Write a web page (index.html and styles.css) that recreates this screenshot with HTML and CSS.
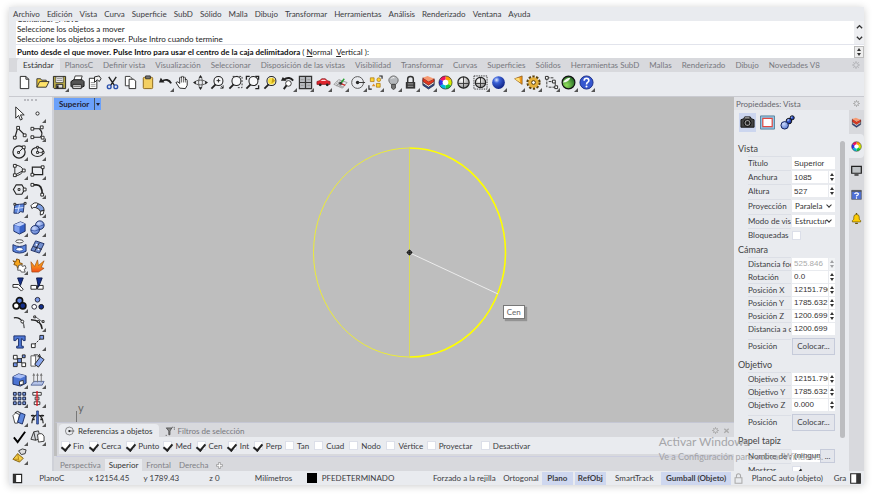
FILE: index.html
```html
<!DOCTYPE html>
<html lang="es">
<head>
<meta charset="utf-8">
<title>Superior</title>
<link rel="stylesheet" href="styles.css">
</head>
<body>
<svg class="defs" aria-hidden="true">
  <defs>
    <radialGradient id="blueball" cx=".35" cy=".3" r=".8"><stop offset="0" stop-color="#dfe9ff"/><stop offset=".3" stop-color="#3b62d8"/><stop offset="1" stop-color="#0a1a78"/></radialGradient>
    <radialGradient id="softball" cx=".35" cy=".3" r=".8"><stop offset="0" stop-color="#cfdcff"/><stop offset="1" stop-color="#4f74cc"/></radialGradient>
    <radialGradient id="greyball" cx=".35" cy=".3" r=".8"><stop offset="0" stop-color="#fff"/><stop offset="1" stop-color="#888"/></radialGradient>
    <radialGradient id="greenball" cx=".35" cy=".7" r=".8"><stop offset="0" stop-color="#8fe05a"/><stop offset="1" stop-color="#175a20"/></radialGradient>
    <linearGradient id="fire" x2="0" y2="1"><stop offset="0" stop-color="#ffc21a"/><stop offset="1" stop-color="#f0501a"/></linearGradient>
    <symbol id="gear" viewBox="0 0 16 16"><circle cx="8" cy="8" r="4.5" fill="none" stroke="currentColor" stroke-width="2"/><path d="M8 0v4M8 12v4M0 8h4M12 8h4M2.5 2.5l2.6 2.6M10.9 10.9l2.6 2.6M13.5 2.5l-2.6 2.6M5.1 10.9l-2.6 2.6" stroke="currentColor" stroke-width="2"/></symbol>
    <symbol id="wheel" viewBox="0 0 16 16"><g fill="none" stroke-width="4"><path d="M8 3a5 5 0 0 1 4.3 2.5" stroke="#ff9d00"/><path d="M12.3 5.5a5 5 0 0 1 0 5" stroke="#d6e800"/><path d="M12.3 10.5A5 5 0 0 1 8 13" stroke="#18c840"/><path d="M8 13a5 5 0 0 1-4.3-2.5" stroke="#00b8e0"/><path d="M3.7 10.5a5 5 0 0 1 0-5" stroke="#3430e8"/><path d="M3.7 5.5A5 5 0 0 1 8 3" stroke="#f01060"/></g><circle cx="8" cy="8" r="2.900" fill="#fff"/><circle cx="8" cy="8" r="7" fill="none" stroke="#222" stroke-width=".7"/></symbol>
    <symbol id="layers" viewBox="0 0 16 16"><path d="M2 8l6 4 6-4v3l-6 4-6-4z" fill="#24429c" stroke="#222" stroke-width=".7"/><path d="M2 5l6 4 6-4v4l-6 4-6-4z" fill="#f4f4f4" stroke="#222" stroke-width=".7"/><path d="M2 3l6 4 6-3v3l-6 4-6-4z" fill="#e2391f" stroke="#511" stroke-width=".7"/><path d="M2 3l5-2 7 3-6 3z" fill="#f79a72"/></symbol>
    <symbol id="lens" viewBox="0 0 16 16"><circle cx="9" cy="6.500" r="4.800" fill="#f7f8fa" stroke="#222" stroke-width="1.100"/><path d="M6 10L1.500 14.500" stroke="#222" stroke-width="2"/></symbol>
    <symbol id="target" viewBox="0 0 16 16"><circle cx="7" cy="8" r="6.300" fill="none" stroke="#555"/><circle cx="7" cy="8" r="1.800" fill="#222"/><path d="M7 8h8" stroke="#333"/></symbol>
  </defs>
</svg>
<div class="window">
  <nav class="menu">
    <a href="#">Archivo</a><a href="#">Edición</a><a href="#">Vista</a><a href="#">Curva</a><a href="#">Superficie</a><a href="#">SubD</a><a href="#">Sólido</a><a href="#">Malla</a><a href="#">Dibujo</a><a href="#">Transformar</a><a href="#">Herramientas</a><a href="#">Análisis</a><a href="#">Renderizado</a><a href="#">Ventana</a><a href="#">Ayuda</a>
  </nav>
  <section class="command">
    <div class="history">
      <p>Comando: _Move</p>
      <p>Seleccione los objetos a mover</p>
      <p>Seleccione los objetos a mover. Pulse Intro cuando termine</p>
      <div class="scroll"><svg viewBox="0 0 8 8"><path d="M1 6l3-3 3 3" fill="none" stroke="#333" stroke-width="1.600"/></svg><svg viewBox="0 0 8 8"><path d="M1 2l3 3 3-3" fill="none" stroke="#333" stroke-width="1.600"/></svg></div>
    </div>
    <div class="prompt"><p><b>Punto desde el que mover. Pulse Intro para usar el centro de la caja delimitadora</b> ( <u>N</u>ormal&nbsp; <u>V</u>ertical ):</p><span class="spin boxed"></span></div>
  </section>
  <nav class="tabs">
    <button class="on">Estándar</button><button>PlanosC</button><button>Definir vista</button><button>Visualización</button><button>Seleccionar</button><button>Disposición de las vistas</button><button>Visibilidad</button><button>Transformar</button><button>Curvas</button><button>Superficies</button><button>Sólidos</button><button>Herramientas SubD</button><button>Mallas</button><button>Renderizado</button><button>Dibujo</button><button>Novedades V8</button>
    <svg class="cog"><use href="#gear"/></svg>
  </nav>
  <div class="toolbar">
    <div class="tools">
      <button aria-label="Nuevo"><svg viewBox="0 0 16 16"><path d="M3.500 1.500h6l3 3v10h-9z" fill="#fff" stroke="#222"/><path d="M9.500 1.500v3h3" fill="none" stroke="#222"/></svg></button>
      <button aria-label="Abrir"><svg viewBox="0 0 16 16"><path d="M2 13V4h4l1 1.500h5V8" fill="#f4cf3a" stroke="#333"/><path d="M2 13l3-6h10l-3 6z" fill="#ffe36a" stroke="#333"/></svg></button>
      <button class="more" aria-label="Guardar"><svg viewBox="0 0 16 16"><path d="M1.500 1.500h13v13h-12l-1-1z" fill="#b5a646" stroke="#222"/><path d="M4 2h8v6H4z" fill="#fff" stroke="#333" stroke-width=".7"/><path d="M5 4h6M5 6h6" stroke="#777"/><path d="M4.500 10h7v4h-7z" fill="#ddd" stroke="#222"/><path d="M6 11v3" stroke="#222" stroke-width="2"/></svg></button>
      <button aria-label="Imprimir"><svg viewBox="0 0 16 16"><path d="M4 6l1.500-5H13l-1.500 5" fill="#fff" stroke="#333"/><path d="M1 7l3-2h9l2 2v5l-2 1H2l-1-1z" fill="#555" stroke="#111"/><path d="M3 10h9v4.500H3z" fill="#ddd" stroke="#222"/><path d="M4 12h7" stroke="#555"/></svg></button>
      <button aria-label="Propiedades del documento"><svg viewBox="0 0 16 16"><path d="M2.500 3.500h8v11h-8z" fill="#fff" stroke="#222"/><path d="M8 2l5-1 2 3-2 3-2-2-3 3z" fill="#eee" stroke="#222"/><path d="M4 8h4M4 10h5M4 12h5" stroke="#999"/></svg></button>
      <button aria-label="Cortar"><svg viewBox="0 0 16 16"><path d="M4 2l6 9M12 2l-6 9" stroke="#222" stroke-width="1.500"/><circle cx="4.500" cy="12.500" r="2" fill="none" stroke="#2b51ae" stroke-width="1.500"/><circle cx="11.500" cy="12.500" r="2" fill="none" stroke="#2b51ae" stroke-width="1.500"/></svg></button>
      <button aria-label="Copiar"><svg viewBox="0 0 16 16"><path d="M2.500 1.500h5l2 2v8h-7z" fill="#fff" stroke="#333"/><path d="M6.500 4.500h5l2 2v8h-7z" fill="#fff" stroke="#222"/></svg></button>
      <button aria-label="Pegar"><svg viewBox="0 0 16 16"><rect x="3.500" y="2.500" width="10" height="12" rx="1" fill="#f3cf62" stroke="#8a6416"/><path d="M6 1h5v3H6z" fill="#777" stroke="#333"/></svg></button>
      <button class="more" aria-label="Deshacer"><svg viewBox="0 0 16 16"><path d="M4 7c4-3 8-2 10 2" fill="none" stroke="#222" stroke-width="2"/><path d="M1 8l2-5 4 5z" fill="#222"/></svg></button>
      <button aria-label="Desplazar"><svg viewBox="0 0 16 16"><path d="M5 14l-4-6q2-2 4 1V3q1-2 2 0V2q1-2 2 0v1q1-2 2 0v2q2-1 2 1v5l-2 3.500z" fill="#fff" stroke="#222"/><path d="M7 3v5M9 3v5M11 4v4" stroke="#222" stroke-width=".7"/></svg></button>
      <button aria-label="Rotar vista"><svg viewBox="0 0 16 16"><ellipse cx="8" cy="8" rx="6" ry="2.500" fill="none" stroke="#555"/><ellipse cx="8" cy="8" rx="2" ry="6" fill="none" stroke="#555"/><path d="M8 0l2 3H6zM8 16l-2-3h4zM0 8l3-2v4zM16 8l-3-2v4z" fill="#222"/></svg></button>
      <button aria-label="Zoom dinámico"><svg viewBox="0 0 16 16"><use href="#lens"/><path d="M7 6h4M9 4v4M12 12l2 2M14 11v3h-3" stroke="#222" fill="none"/></svg></button>
      <button aria-label="Zoom ventana"><svg viewBox="0 0 16 16"><path d="M5 1.500h10v12h-6" fill="none" stroke="#333" stroke-dasharray="2 1.500"/><use href="#lens"/></svg></button>
      <button aria-label="Zoom extensión"><svg viewBox="0 0 16 16"><path d="M1.500 5V1.500H5M11 1.500h3.500V5M14.500 11v3.500H11" fill="none" stroke="#222" stroke-width="1.400"/><use href="#lens"/></svg></button>
      <button aria-label="Zoom seleccionado"><svg viewBox="0 0 16 16"><use href="#lens"/><circle cx="9" cy="6.500" r="3.700" fill="#f7df45"/><path d="M10 3l3 3-4 3" fill="#c9a114"/></svg></button>
      <button class="more" aria-label="Deshacer vista"><svg viewBox="0 0 16 16"><path d="M4 5c4-3 8-2 10 1" fill="none" stroke="#222" stroke-width="2"/><path d="M1 6l2-4 4 4z" fill="#222"/><circle cx="9" cy="9" r="3" fill="#fff" stroke="#333"/><path d="M7 11l-3 4" stroke="#222" stroke-width="2"/></svg></button>
      <button class="more" aria-label="Cuatro vistas"><svg viewBox="0 0 16 16"><path d="M1.500 1.500h13v13h-13z" fill="#b9bcc1" stroke="#333" stroke-width="1.300"/><path d="M8 2v12M2 8h12" stroke="#333" stroke-width="1.300"/><path d="M3 5h3M10 5h3M3 11h3M10 11h3" stroke="#999"/></svg></button>
      <button class="more" aria-label="Vista nombrada"><svg viewBox="0 0 16 16"><path d="M1 7l3-1 2-2h4l2 2 3 1v3H1z" fill="#e0252d" stroke="#7a1015" stroke-width=".7"/><path d="M6.500 5h3l1.500 1.500H5z" fill="#fdd"/><circle cx="4.500" cy="10.500" r="1.500" fill="#222"/><circle cx="12" cy="10.500" r="1.500" fill="#222"/></svg></button>
      <button class="more" aria-label="Plano de construcción"><svg viewBox="0 0 16 16"><path d="M1 10l5-5 9 3-5 6zM4 7l9 4M3 9l8 4M8 6l-4 6M11 7l-4 6" fill="none" stroke="#999"/><path d="M8 9l4-5" stroke="#25a030" stroke-width="1.500"/><path d="M8 9l5 2" stroke="#d03030" stroke-width="1.500"/><circle cx="8" cy="9" r="1.500" fill="#333"/></svg></button>
      <button class="more" aria-label="Referencias"><svg viewBox="0 0 16 16"><use href="#target"/></svg></button>
      <button class="more" aria-label="Seleccionar"><svg viewBox="0 0 16 16"><path d="M1 11v4h3M12 1h3v3" fill="none" stroke="#222" stroke-width="1.200"/><path d="M2.500 3h4v4h-4zM9 9h4v4H9z" fill="#fcd22e" stroke="#a06a08" stroke-width=".7"/><circle cx="11.500" cy="5" r="2" fill="#fcd22e" stroke="#a06a08" stroke-width=".7"/><path d="M4 12l2-3 2 3z" fill="#e0902a"/></svg></button>
      <button class="more" aria-label="Ocultar"><svg viewBox="0 0 16 16"><path d="M5.500 10C0 5 5 1 8 1s8 4 2.500 9z" fill="#b5b8bc" stroke="#666"/><path d="M6 10h4v4l-2 1.500L6 14z" fill="#777" stroke="#444"/><path d="M6 4q1-2 3-1" stroke="#fff" fill="none"/></svg></button>
      <button class="more" aria-label="Bloquear"><svg viewBox="0 0 16 16"><path d="M5 8V4q0-2.500 3-2.500T11 4v4" fill="none" stroke="#333" stroke-width="1.600"/><path d="M3 7.500h10v7H3z" fill="#333"/><path d="M5 9.500h6M5 12h6" stroke="#aaa"/></svg></button>
      <button class="more" aria-label="Capas"><svg><use href="#layers"/></svg></button>
      <button class="more" aria-label="Color"><svg><use href="#wheel"/></svg></button>
      <button aria-label="Sombrear"><svg viewBox="0 0 16 16"><circle cx="8" cy="8" r="6" fill="url(#greyball)" stroke="#222" stroke-width="1.300"/><path d="M8 2v12M2 9h12" stroke="#333"/></svg></button>
      <button class="more" aria-label="Renderizar ventana"><svg viewBox="0 0 16 16"><rect x="1" y="1" width="14" height="14" fill="none" stroke="#333" stroke-dasharray="1.500 1"/><circle cx="8" cy="8" r="5.500" fill="url(#greyball)" stroke="#222" stroke-width="1.300"/><path d="M8 3v10M3 9h10" stroke="#333"/></svg></button>
      <button class="more" aria-label="Renderizar"><svg viewBox="0 0 16 16"><circle cx="8" cy="8" r="6.800" fill="url(#blueball)"/></svg></button>
      <button class="more" aria-label="Luz"><svg viewBox="0 0 16 16"><path d="M6 4l8-3v9z" fill="#f39b1b" stroke="#7a4a08" stroke-width=".7"/><path d="M6 4l5-1 1 5z" fill="#ffe07a"/></svg></button>
      <button class="more" aria-label="Opciones"><svg viewBox="0 0 16 16"><circle cx="8" cy="8" r="6.200" fill="none" stroke="#5a400c" stroke-width="2.800" stroke-dasharray="2.400 1.500"/><circle cx="8" cy="8" r="5.600" fill="#e5b03a"/><circle cx="8" cy="8" r="2" fill="#fff" stroke="#4a3408"/></svg></button>
      <button class="more" aria-label="Cota"><svg viewBox="0 0 16 16"><path d="M3 3v10M3 3h7M5 7h7v6M5 13h9" fill="none" stroke="#333" stroke-dasharray="3 1"/><path d="M1.500 1.500h3v3h-3zM9 5.500h3v3H9zM11.500 11.500h3v3h-3z" fill="#fff" stroke="#222"/></svg></button>
      <button class="more" aria-label="Grasshopper"><svg viewBox="0 0 16 16"><circle cx="8" cy="8" r="6.800" fill="url(#greenball)" stroke="#111" stroke-width="1.300"/><path d="M2 8q3-5 8-5-2 5-8 5z" fill="#f2f7ee"/></svg></button>
      <button class="more" aria-label="Ayuda"><svg viewBox="0 0 16 16"><circle cx="8" cy="8" r="7" fill="#3557cf" stroke="#1d2f86"/><path d="M5.500 6q0-2.500 2.500-2.500T10.500 6c0 1.700-2.500 1.800-2.500 4" fill="none" stroke="#fff" stroke-width="1.700"/><circle cx="8" cy="12.300" r="1.100" fill="#fff"/></svg></button>
    </div>
  </div>
  <main class="main">
    <aside class="palette">
      <button aria-label="Puntero"><svg viewBox="0 0 16 16"><path d="M4 1v12l3-3 2 5 2-1-2-4.500h4z" fill="#fff" stroke="#222"/></svg></button>
      <button class="more" aria-label="Punto"><svg viewBox="0 0 16 16"><circle cx="8" cy="8" r="1.700" fill="#fff" stroke="#222"/></svg></button>
      <button class="more" aria-label="Polilínea"><svg viewBox="0 0 16 16"><path d="M3 14L6 3l8 8" fill="none" stroke="#222" stroke-width="1.300"/><path d="M1.500 12h3v3h-3zM5 1.500h3v3H5zM12 9.500h3v3h-3z" fill="#fff" stroke="#222"/></svg></button>
      <button class="more" aria-label="Curva"><svg viewBox="0 0 16 16"><path d="M3 4h7q5 5 1 9H3" fill="none" stroke="#222" stroke-width="1.200"/><path d="M1 2.500h3v3H1zM11 1h3v3h-3zM1 11.500h3v3H1zM12 12h3v3h-3z" fill="#fff" stroke="#222"/></svg></button>
      <button class="more" aria-label="Círculo"><svg viewBox="0 0 16 16"><circle cx="7.500" cy="8.500" r="6.500" fill="none" stroke="#222" stroke-width="1.300"/><path d="M7 9l5-5" stroke="#222"/><path d="M6 8h2v2H6zM11 2h3v3h-3z" fill="#fff" stroke="#222"/></svg></button>
      <button class="more" aria-label="Elipse"><svg viewBox="0 0 16 16"><ellipse cx="8" cy="8.500" rx="6.500" ry="4.800" fill="none" stroke="#222" stroke-width="1.200"/><path d="M8 3v6h6" fill="none" stroke="#222" stroke-width=".7"/><path d="M7 2.500h2v2H7zM7 8h2v2H7zM13 8h2v2h-2z" fill="#fff" stroke="#222"/></svg></button>
      <button class="more" aria-label="Arco"><svg viewBox="0 0 16 16"><path d="M3 3v10l9-5M3 2q8 1 9 6M3 14q7-1 9-6" fill="none" stroke="#222"/><path d="M1.500 1.500h3v3h-3zM1.500 11.500h3v3h-3zM11 6.500h3v3h-3z" fill="#fff" stroke="#222"/></svg></button>
      <button class="more" aria-label="Rectángulo"><svg viewBox="0 0 16 16"><path d="M2.500 4.500h11v8h-11z" fill="none" stroke="#222" stroke-width="1.300"/><path d="M1 11h3v3H1zM12 3h3v3h-3z" fill="#fff" stroke="#222"/></svg></button>
      <button class="more" aria-label="Polígono"><svg viewBox="0 0 16 16"><path d="M1.500 8l3-5h6l3 5-3 5h-6z" fill="none" stroke="#222" stroke-width="1.200"/><path d="M6.500 7h2v2h-2zM12 6.500h3v3h-3z" fill="#fff" stroke="#222"/></svg></button>
      <button class="more" aria-label="Empalme"><svg viewBox="0 0 16 16"><path d="M2 3h5q6 0 6 10" fill="none" stroke="#222" stroke-width="1.800"/><path d="M1 1.500h3v3H1zM11.500 12h3v3h-3z" fill="#fff" stroke="#222"/></svg></button>
      <button class="more" aria-label="Superficie"><svg viewBox="0 0 16 16"><path d="M3 4l10-1-1 9q-3-2-5 1l-5 0z" fill="#5e87dd" stroke="#1f2d5c"/><path d="M8 4L6 13M3 8l9-1" stroke="#dce6ff"/><path d="M2 2.500h2v2H2zM13 1.500h2v2h-2z" fill="#fff" stroke="#222"/></svg></button>
      <button class="more" aria-label="Barrido"><svg viewBox="0 0 16 16"><path d="M1 5q4-5 8-2L6 7Q4 6 2 8z" fill="#fff" stroke="#222"/><path d="M9 3q6 2 6 7l-4 1Q10 8 6 7z" fill="#7f9fe0" stroke="#222"/><path d="M11 11l4-1-1 4-3 1z" fill="#fff" stroke="#222"/></svg></button>
      <button class="more" aria-label="Caja"><svg viewBox="0 0 16 16"><path d="M2 5l7-3 5 2v8l-6 3-6-3z" fill="#3862c8" stroke="#1b2d63"/><path d="M2 5l7-3 5 2-6 3z" fill="#bfd0fb"/><path d="M2.500 5.500L8 7.500v7l-5.500-3z" fill="#7f9fee"/></svg></button>
      <button class="more" aria-label="Unión booleana"><svg viewBox="0 0 16 16"><circle cx="10.500" cy="5.500" r="4.600" fill="url(#softball)" stroke="#1b2d63"/><circle cx="5.500" cy="10.500" r="4.600" fill="url(#softball)" stroke="#1b2d63"/><path d="M1 11q4 2 9-1M6 6q4 2 9-1" stroke="#1b3d93" stroke-width=".7" fill="none"/></svg></button>
      <button class="more" aria-label="Cilindro"><svg viewBox="0 0 16 16"><ellipse cx="8" cy="2.500" rx="4" ry="1.700" fill="#fff" stroke="#444"/><path d="M1 6q7 4 14 0v7q-7 4-14 0z" fill="#5c86e0" stroke="#1b2d63"/><ellipse cx="8" cy="11" rx="4" ry="2" fill="#fff" stroke="#2d4f9f"/></svg></button>
      <button class="more" aria-label="Malla"><svg viewBox="0 0 16 16"><path d="M6 2l9 3-5 10-9-3z" fill="#728fce" stroke="#1b2d63"/><path d="M10 4L5 13M3.500 8l9 3" stroke="#223"/><circle cx="7" cy="6" r="1" fill="#fff"/><circle cx="9" cy="11" r="1" fill="#fff"/></svg></button>
      <button class="more" aria-label="Unir"><svg viewBox="0 0 16 16"><path d="M1 3l3 1 1-3 3 1v3l3 1-1 3-4 2-1-3-3-1 1-2z" fill="#f7a51c" stroke="#7a4a08"/><path d="M7 8l3-1 1 2 3-1 1 3-2 1 1 3-4 0-1-2-3 0z" fill="#fff" stroke="#555"/></svg></button>
      <button aria-label="Descomponer"><svg viewBox="0 0 16 16"><path d="M2 15L1 4l4 5 3-7 1 6 6-5-3 7 3 1-6 4z" fill="url(#fire)" stroke="#a2460c" stroke-width=".7"/></svg></button>
      <button aria-label="Recortar"><svg viewBox="0 0 16 16"><path d="M1 8h6l5 5-2 2-4-4H1z" fill="#fff" stroke="#222"/><path d="M6 1h6l-3 8z" fill="#15308c" stroke="#0a1747"/></svg></button>
      <button aria-label="Partir"><svg viewBox="0 0 16 16"><path d="M1 9h6v4H1zM8 9h6v4H8z" fill="#fff" stroke="#222"/><path d="M7 1h6l-4 10z" fill="#15308c" stroke="#0a1747"/></svg></button>
      <button class="more" aria-label="Agrupar"><svg viewBox="0 0 16 16"><circle cx="8" cy="5" r="3.300" fill="#5f83e0" stroke="#111" stroke-width="1.800"/><circle cx="4.500" cy="10.500" r="3.300" fill="#fff" stroke="#111" stroke-width="1.800"/><circle cx="11.500" cy="10.500" r="3.300" fill="#15308c" stroke="#111" stroke-width="1.800"/></svg></button>
      <button aria-label="Desagrupar"><svg viewBox="0 0 16 16"><circle cx="8" cy="4" r="2.500" fill="#7d9ae8" stroke="#223"/><circle cx="4.500" cy="11.500" r="2.500" fill="#fff" stroke="#223"/><circle cx="12" cy="11.500" r="2.500" fill="#15308c" stroke="#111"/></svg></button>
      <button aria-label="Extender"><svg viewBox="0 0 16 16"><path d="M2 3q6-1 9 4" fill="none" stroke="#222" stroke-width="1.400"/><path d="M11 7q2 3 2 7" fill="none" stroke="#222"/><circle cx="11" cy="7" r="1.500" fill="#fff" stroke="#222"/></svg></button>
      <button class="more" aria-label="Puntos"><svg viewBox="0 0 16 16"><path d="M1 5q11 0 12 10" fill="none" stroke="#222" stroke-width="1.500"/><path d="M6 2l7 5" stroke="#222" stroke-width=".7"/><path d="M4 1h2v2H4zM8 6h2v2H8zM13 6h2v2h-2z" fill="#fff" stroke="#222"/></svg></button>
      <button aria-label="Texto"><svg viewBox="0 0 16 16"><path d="M2 2h12v5h-2l-1-2h-1v8h2v2H5v-2h2V5H5L4 7H2z" fill="#4f78d6" stroke="#182c68"/></svg></button>
      <button class="more" aria-label="Mover"><svg viewBox="0 0 16 16"><path d="M5 11l6-6" stroke="#222" stroke-dasharray="2 1"/><path d="M1.500 10.500h4v4h-4z" fill="#fff" stroke="#222"/><path d="M10.500 1.500h4v4h-4z" fill="#7d9cec" stroke="#222"/></svg></button>
      <button aria-label="Matriz"><svg viewBox="0 0 16 16"><path d="M4 4l8 8M12 4l-8 8" stroke="#222"/><path d="M1.500 2.500h4v4h-4zM10.500 10.500h4v4h-4z" fill="#fff" stroke="#222"/><path d="M6 6h4v4H6zM1.500 10.500h4v4h-4zM11 2h3v3h-3z" fill="#6d90e6" stroke="#222"/></svg></button>
      <button aria-label="Rotar"><svg viewBox="0 0 16 16"><path d="M1 3h5v11H1z" fill="#fff" stroke="#555"/><path d="M11 4l4 3-6 8-4-3z" fill="#88a5ec" stroke="#222"/><path d="M4 2q5-1 7 2l-1-3M11 4l-3 0" fill="none" stroke="#222"/></svg></button>
      <button class="more" aria-label="Caja delimitadora"><svg viewBox="0 0 16 16"><path d="M1 5l6-3 8 2v8l-6 3-8-2z" fill="#4b73d2" stroke="#1b2d63"/><path d="M1 5l6-3 8 2-6 3z" fill="#aabff6"/><path d="M8 10l4-1v4l-4 1z" fill="#fff" stroke="#333"/></svg></button>
      <button class="more" aria-label="Proyectar"><svg viewBox="0 0 16 16"><path d="M1 14l3-4h11l-2 4z" fill="#b5c4ea" stroke="#5a6a9a"/><path d="M4 2v9M8 2v9M12 2v9" stroke="#777"/><path d="M2.500 4L4 1l1.500 3zM6.500 4L8 1l1.500 3zM10.500 4L12 1l1.500 3z" fill="#777"/></svg></button>
      <button class="more" aria-label="Matriz rectangular"><svg viewBox="0 0 16 16"><path d="M1.500 1.500h3v3h-3zM6.500 1.500h3v3h-3zM11.500 1.500h3v3h-3zM1.500 6.500h3v3h-3zM6.500 6.500h3v3h-3zM11.500 6.500h3v3h-3zM1.500 11.500h3v3h-3zM6.500 11.500h3v3h-3zM11.500 11.500h3v3h-3z" fill="#7f9fe8" stroke="#18203c"/></svg></button>
      <button class="more" aria-label="Alinear"><svg viewBox="0 0 16 16"><path d="M3 1.500h9v3H3zM5.500 6.500h4v3h-4zM4.500 11.500h6v3h-6z" fill="#fff" stroke="#333"/><path d="M7.500 0v16" stroke="#e0202a" stroke-width="1.500"/></svg></button>
      <button class="more" aria-label="Copiar rotado"><svg viewBox="0 0 16 16"><path d="M1 6l3-3 4 2-2 9H3z" fill="#fff" stroke="#444"/><path d="M9 3l5 2-3 10-5-2z" fill="#5e87dd" stroke="#1b2d63"/><path d="M3 3q3-3 6 0" fill="none" stroke="#222"/></svg></button>
      <button class="more" aria-label="Simetría"><svg viewBox="0 0 16 16"><path d="M2 14q0-6 5-9M14 14q0-6-5-9M1 6h4M11 6h4" fill="none" stroke="#222" stroke-width="1.300"/><path d="M7 1h2v14H7z" fill="#4770cf" stroke="#1b2d63" stroke-width=".7"/><path d="M2 5h2v2H2zM3 9h2v2H3zM12 5h2v2h-2zM11 9h2v2h-2z" fill="#222"/></svg></button>
      <button class="more" aria-label="Comprobar"><svg viewBox="0 0 16 16"><path d="M2 9l4 5 8-11" fill="none" stroke="#000" stroke-width="2"/></svg></button>
      <button class="more" aria-label="Sólidos"><svg viewBox="0 0 16 16"><path d="M1 11l3-8 5-1 2 8-5 2z" fill="#d5d8dd" stroke="#333"/><path d="M8 6q5-3 7 2v5l-6 1z" fill="#fff" stroke="#333"/><path d="M4 3l2 9" stroke="#333"/></svg></button>
      <button class="more" aria-label="Orientar"><svg viewBox="0 0 16 16"><path d="M7 3l4-2 4 1-1 4-4 1z" fill="#ddd" stroke="#333"/><path d="M1 12l5-6 6 5-4 4z" fill="#f6cf47" stroke="#7b5a0c"/><path d="M6 6l1 6-6 0M7 12l1 3" stroke="#b58718" fill="none"/></svg></button>
    </aside>
    <section class="center">
      <div class="viewport">
        <svg class="drawing" viewBox="0 0 680 325" preserveAspectRatio="xMidYMid meet">
          <path d="M355.500 51a96 104.500 0 0 0 0 209" fill="none" stroke="#ecec38"/>
          <path d="M355.500 51a96 104.500 0 0 1 0 209" fill="none" stroke="#ff0" stroke-width="1.600"/>
          <path d="M355.500 51v209" stroke="#dada5c"/>
          <path d="M356 156l88 41" stroke="#ececec"/>
          <circle cx="355.500" cy="155.500" r="2" fill="#777" stroke="#111"/><path d="M352.500 155.500h6M355.500 152.500v6" stroke="#111" stroke-width=".7"/>
          <path d="M22.500 314v11" stroke="#777"/>
          <text x="24" y="315">y</text>
        </svg>
        <div class="title"><b>Superior</b><button aria-label="Menú de vista"></button></div>
        <div class="tip">Cen</div>
      </div>
      <div class="snaps">
        <div class="snaptabs">
          <button class="on"><svg><use href="#target"/></svg>Referencias a objetos</button>
          <button><svg viewBox="0 0 16 16"><path d="M2 3h9L8 8v6H6V8z" fill="#888" stroke="#333"/><path d="M11 2h4v4M1 15h3" fill="none" stroke="#333" stroke-dasharray="2 1"/></svg>Filtros de selección</button>
          <span class="ends"><svg><use href="#gear"/></svg><svg viewBox="0 0 16 16"><path d="M3 4l10 9M13 4L3 13" stroke="currentColor" stroke-width="3"/></svg></span>
        </div>
        <div class="checks">
          <label><input type="checkbox" checked>Fin</label><label><input type="checkbox" checked>Cerca</label><label><input type="checkbox" checked>Punto</label><label><input type="checkbox" checked>Med</label><label><input type="checkbox" checked>Cen</label><label><input type="checkbox" checked>Int</label><label><input type="checkbox" checked>Perp</label><label><input type="checkbox">Tan</label><label><input type="checkbox">Cuad</label><label><input type="checkbox">Nodo</label><label><input type="checkbox">Vértice</label><label><input type="checkbox">Proyectar</label><label><input type="checkbox">Desactivar</label>
        </div>
      </div>
      <nav class="views"><button>Perspectiva</button><button class="on">Superior</button><button>Frontal</button><button>Derecha</button><button aria-label="Nueva vista"><svg viewBox="0 0 16 16"><path d="M6 1h4v5h5v4h-5v5H6v-5H1V6h5z" fill="#fff" stroke="#888" stroke-width="1.500"/></svg></button></nav>
    </section>
    <aside class="panel">
      <header><span>Propiedades: Vista</span><svg><use href="#gear"/></svg></header>
      <div class="body">
        <div class="props">
          <div class="modes">
            <button class="on" aria-label="Cámara"><svg viewBox="0 0 16 16"><path d="M1 5l3-1 1-2h6l1 2 3 1v8H1z" fill="#444" stroke="#111"/><circle cx="8" cy="8.500" r="3.800" fill="#999" stroke="#000"/><circle cx="8" cy="8.500" r="2" fill="#222"/><path d="M5 3h5" stroke="#bbb"/></svg></button>
            <button aria-label="Vista"><svg viewBox="0 0 16 16"><path d="M.5 1h15v14H.5z" fill="#8fc7e8" stroke="#58809a"/><path d="M3 3.500h10v9H3z" fill="#fff" stroke="#e04a42" stroke-width="1.300"/></svg></button>
            <button aria-label="Material"><svg viewBox="0 0 16 16"><circle cx="13" cy="3" r="2.200" fill="url(#blueball)" stroke="#111"/><circle cx="9.500" cy="6.500" r="3" fill="url(#blueball)" stroke="#111"/><circle cx="5" cy="11" r="4" fill="url(#softball)" stroke="#0a1a58"/></svg></button>
          </div>
          <div class="scroller">
            <form class="fields">
              <h2>Vista</h2>
              <div class="row"><label for="a1">Título</label><input id="a1" value="Superior"></div>
              <div class="row"><label for="a2">Anchura</label><input id="a2" value="1085"><span class="spin"></span></div>
              <div class="row"><label for="a3">Altura</label><input id="a3" value="527"><span class="spin"></span></div>
              <div class="row pick"><label for="a4">Proyección</label><select id="a4"><option>Paralela</option></select></div>
              <div class="row pick"><label for="a5">Modo de visualización</label><select id="a5"><option>Estructura</option></select></div>
              <div class="row"><label for="a6">Bloqueadas</label><input id="a6" type="checkbox"></div>
              <h2>Cámara</h2>
              <div class="row low off"><label for="b1">Distancia focal</label><input id="b1" value="525.846" disabled><span class="spin"></span></div>
              <div class="row low"><label for="b2">Rotación</label><input id="b2" value="0.0"><span class="spin"></span></div>
              <div class="row low"><label for="b3">Posición X</label><input id="b3" value="12151.796"><span class="spin"></span></div>
              <div class="row low"><label for="b4">Posición Y</label><input id="b4" value="1785.632"><span class="spin"></span></div>
              <div class="row low"><label for="b5">Posición Z</label><input id="b5" value="1200.699"><span class="spin"></span></div>
              <div class="row low"><label for="b6">Distancia a objetivo</label><input id="b6" value="1200.699"></div>
              <div class="row act"><span>Posición</span><button type="button">Colocar...</button></div>
              <h2>Objetivo</h2>
              <div class="row low"><label for="c1">Objetivo X</label><input id="c1" value="12151.796"><span class="spin"></span></div>
              <div class="row low"><label for="c2">Objetivo Y</label><input id="c2" value="1785.632"><span class="spin"></span></div>
              <div class="row low"><label for="c3">Objetivo Z</label><input id="c3" value="0.000"><span class="spin"></span></div>
              <div class="row act"><span>Posición</span><button type="button">Colocar...</button></div>
              <h2>Papel tapiz</h2>
              <div class="row file"><label for="d1">Nombre de archivo</label><input id="d1" value="(ninguno)"><button type="button">...</button></div>
              <div class="row"><label for="d2">Mostrar</label><input id="d2" type="checkbox" checked></div>
            </form>
            <div class="bar"></div>
          </div>
        </div>
        <nav class="side">
          <button aria-label="Capas"><svg><use href="#layers"/></svg></button>
          <button class="on" aria-label="Colores"><svg><use href="#wheel"/></svg></button>
          <button aria-label="Pantalla"><svg viewBox="0 0 16 16"><path d="M1 2h14v10H1z" fill="#bfc3c6" stroke="#222" stroke-width="1.800"/><path d="M5 14.500h6" stroke="#222" stroke-width="2"/></svg></button>
          <button aria-label="Ayuda"><svg viewBox="0 0 16 16"><path d="M1 2h14v13H1z" fill="#4d70d8" stroke="#555"/><path d="M1 2h14v2H1z" fill="#555"/><path d="M5 7q3-3 6 0 0 2-3 3v1M8 12v2" fill="none" stroke="#fff" stroke-width="1.700"/></svg></button>
          <button aria-label="Avisos"><svg viewBox="0 0 16 16"><path d="M2 13V11l2-2V6q0-4 4-4t4 4v3l2 2v2z" fill="#fccb05" stroke="#6d5600"/><path d="M7 0h2v2H7zM6 14h4v2H6z" fill="#6d5600"/></svg></button>
        </nav>
      </div>
    </aside>
  </main>
  <footer class="status">
    <svg viewBox="0 0 16 16"><path d="M2 2h12v12H2z" fill="#fff" stroke="#222" stroke-width="1.600"/><path d="M2 2h4v12H2z" fill="#333"/></svg>
    <span>PlanoC</span><span>x 12154.45</span><span>y 1789.43</span><span>z 0</span><span>Milímetros</span><i class="swatch"></i><span>PFEDETERMINADO</span>
    <button>Forzado a la rejilla</button><button>Ortogonal</button><button class="on">Plano</button><button class="on">RefObj</button><button>SmartTrack</button><button class="on">Gumball (Objeto)</button>
    <svg viewBox="0 0 16 16"><path d="M5 7V4q0-3 3-3t3 3v3M3 7h10v8H3z" fill="none" stroke="#aaa" stroke-width="1.500"/></svg>
    <button class="plane">PlanoC auto (objeto)</button><span>Gra</span>
    <svg viewBox="0 0 16 16"><path d="M1 1h14v14H1z" fill="#fff" stroke="#222" stroke-width="1.600"/><path d="M9 1h6v14H9z" fill="#333"/></svg>
  </footer>
  <div class="notice"><strong>Activar Windows</strong><span>Ve a Configuración para activar Windows.</span></div>
</div>
</body>
</html>
```
FILE: styles.css
```css
* { box-sizing: border-box; }
body {
  margin: 0;
  padding: 7px 9px 13px;
  height: 100vh;
  background: #fff;
  font: 8px/10px Lato, "Open Sans", sans-serif;
  color: #3c3c42;
}
button, input, select { font: inherit; color: inherit; border: 0; margin: 0; padding: 0; background: none; border-radius: 0; }
a { color: inherit; text-decoration: none; }
p, h2 { margin: 0; }
svg { display: block; flex: none; }
.defs { position: absolute; width: 0; height: 0; }
.window {
  position: relative;
  height: 100%;
  display: flex;
  flex-direction: column;
  background: #e9ebef;
  box-shadow: 0 1px 8px #0003;
  white-space: nowrap;
}
.menu { display: flex; gap: 7px; height: 14px; align-items: center; padding-left: 4px; flex: none; }

.command { flex: none; margin-left: 7px; background: #fff; color: #222; }
.history { position: relative; height: 24px; overflow: hidden; display: flex; flex-direction: column; justify-content: flex-end; padding-left: 1px; border-bottom: 1px solid #e2e4ec; }
.history p { flex: none; }
.scroll { position: absolute; right: 0; top: 0; width: 10px; height: 100%; background: #eeeff2; display: flex; flex-direction: column; justify-content: space-around; align-items: center; }
.scroll svg { width: 7px; height: 7px; }
.prompt { display: flex; justify-content: space-between; align-items: center; height: 13px; padding-left: 1px; }
.prompt b { color: #111; }

.spin { width: 7px; height: 12px; flex: none; display: flex; flex-direction: column; align-items: center; justify-content: center; gap: 2px; }
.spin::before, .spin::after { content: ""; border: 2px solid transparent; border-top: 0; border-bottom: 3px solid #333; }
.spin::after { border-bottom: 0; border-top: 3px solid #333; }
.boxed { width: 10px; border: 1px solid #bbb; background: #eee; }

.tabs { display: flex; flex: none; height: 14px; background: #d8d9dd; padding-left: 8px; color: #77787e; }
.tabs button { padding: 0 5px; }
.tabs .on { background: #e9ebef; color: #333; border-radius: 4px 4px 0 0; padding: 0 6px; }
.cog { width: 8px; height: 8px; margin: 3px 4px 0 auto; color: #b5b6ba; }

.toolbar { flex: none; height: 25px; padding: 0 7px; border-bottom: 1px solid #c9cad0; }
.tools { display: flex; max-width: 579px; height: 20px; }
.tools button { flex: 1; }
.tools button, .palette button { position: relative; display: flex; align-items: center; justify-content: center; }
.tools svg, .palette svg { width: 15px; height: 15px; }
.more::after { content: ""; position: absolute; right: 0; bottom: 0; border: 2px solid #555; border-top-color: transparent; border-left-color: transparent; }

.main { flex: 1; min-height: 0; display: flex; }
.palette { width: 45px; flex: none; padding: 7px 7px 0 1px; display: grid; grid-template-columns: 18px 18px; grid-auto-rows: 19px; align-content: start; border-right: 2px solid #cfd1d8; position: relative; }
.palette::before { content: ""; position: absolute; left: 15px; top: 2px; width: 13px; border-top: 2px dotted #b9bac0; }
.center { flex: 1; min-width: 0; display: flex; flex-direction: column; background: #d8d9dd; }
.viewport { position: relative; flex: 1; min-height: 0; background: #bebebe; }
.drawing { width: 100%; height: 100%; }
.drawing text { font-size: 11px; fill: #666; }
.title { position: absolute; left: 0; top: 1px; display: flex; height: 12px; background: #6ba1fa; padding-left: 5px; line-height: 12px; color: #223; gap: 5px; }
.title button { width: 7px; display: grid; place-items: center; border-left: 1px solid #456; }
.title button::before { content: ""; border: 2px solid transparent; border-top: 3px solid #223; border-bottom: 0; }
.tip { position: absolute; left: 66%; top: 64%; padding: 1px 3px; background: #fff; border: 1px solid #777; box-shadow: 2px 2px 1px #7779; color: #666; }

.snaps { border-left: 3px solid #bebebe; flex: none; height: 34px; padding: 1px 0 0 2px; border-top: 1px solid #c5c7d4; }
.snaptabs { display: flex; height: 13px; color: #77787e; }
.snaptabs button { display: flex; align-items: center; gap: 3px; padding: 0 6px; }
.snaptabs svg { width: 10px; height: 10px; }
.snaptabs .on { background: #e9ebef; color: #333; border-radius: 4px 4px 0 0; }
.ends { margin-left: auto; display: flex; align-items: center; gap: 4px; padding-right: 4px; color: #aaa; }
.ends svg { width: 7px; height: 7px; }
.checks { height: 17px; background: #e9ebef; display: grid; align-items: center; padding-left: 2px; grid-template-columns: 28fr 37fr 37fr 33fr 31fr 26fr 31fr 29fr 35fr 37fr 40fr 54fr 252fr; }
.checks label { display: flex; align-items: center; gap: 3px; min-width: 0; }
input[type="checkbox"] { appearance: none; width: 9px; height: 9px; flex: none; background: #fff; border: 1px solid #dcdfe9; display: grid; place-items: center; }
input[type="checkbox"]:checked::after { content: ""; width: 4px; height: 7px; border: solid #222; border-width: 0 2px 2px 0; transform: rotate(40deg); }
.views { display: flex; height: 15px; flex: none; margin-left: 2px; padding-top: 2px; border-top: 1px solid #cccee0; color: #808187; }
.views button { padding: 0 4px; }
.views .on { background: #e9ebef; color: #333; }
.views svg { width: 7px; height: 7px; }

.panel { width: 130px; flex: none; display: flex; flex-direction: column; }
.panel header { display: flex; justify-content: space-between; align-items: center; height: 13px; padding: 0 4px 0 2px; background: #e2e3e7; color: #66676c; flex: none; }
.panel header svg { width: 7px; height: 7px; color: #aaa; }
.body { flex: 1; min-height: 0; display: flex; }
.props { flex: 1; min-width: 0; display: flex; flex-direction: column; }
.modes { display: flex; gap: 3px; padding: 3px 5px 0; height: 31px; flex: none; }
.modes button { width: 17px; height: 19px; display: grid; place-items: center; }
.modes .on { background: #ccd6ef; }
.modes svg { width: 15px; height: 15px; }
.scroller { flex: 1; min-height: 0; overflow: hidden; display: flex; gap: 5px; padding: 0 4px 0 4px; }
.fields { flex: 1; min-width: 0; }
.bar { width: 5px; height: 90%; background: #bcbdc0; border-radius: 3px; flex: none; }
.fields h2 { font-size: 9px; line-height: 15px; font-weight: 400; color: #444; }
.row { display: flex; align-items: center; height: 14px; padding-left: 10px; }
.row label, .row > span:first-child { width: 43px; margin-right: 1px; flex: none; overflow: hidden; border-top: 1px solid #dcdfe6; line-height: 13px; }
.row input:not([type]), .row select { flex: 1; min-width: 0; height: 12px; background: #fff; padding-left: 3px; color: #333; }
.row input:not([type]) { font-family: "Liberation Sans Narrow", "Liberation Sans", sans-serif; padding-left: 2px; }
.row select { appearance: none; padding-right: 8px; }
.row .spin { background: #fff; border-left: 1px solid #e9ebef; }
.pick { height: 15px; position: relative; }
.pick::after { content: ""; position: absolute; right: 4px; top: 5px; width: 3px; height: 3px; border: solid #333; border-width: 0 1px 1px 0; transform: rotate(45deg); }
.low { height: 13px; }
.low label { line-height: 12px; }
.row input:disabled { color: #aaa; }
.off .spin { opacity: .4; }
.act { height: 22px; }
.row button { flex: 1; height: 17px; border: 1px solid #c6cbda; background: #e4e6ec; }
.row.file button { flex: none; width: 15px; height: 14px; }
.file { height: 15px; }
.side { width: 15px; flex: none; background: #d8d9dd; display: flex; flex-direction: column; }
.side button { height: 24px; display: grid; place-items: center; }
.side .on { background: #e9ebef; border-radius: 0 4px 4px 0; }
.side svg { width: 11px; height: 11px; }

.status {
  flex: none;
  height: 14px;
  display: grid;
  align-items: center;
  padding-left: 3px;
  grid-template-columns: 27fr 49fr 54fr 65fr 45fr 52fr 14fr 106fr 70fr 42fr 32fr 33fr 52fr 72fr 18fr 81fr 16fr 14fr;
}
.status > * { min-width: 0; text-align: left; }
.status svg { width: 11px; height: 11px; }
.status button { height: 13px; text-align: center; }
.status .on { background: #ced7ef; font-weight: 700; margin-right: 2px; }
.status .plane { text-align: left; }
.swatch { width: 10px; height: 10px; background: #000; }
.notice { position: absolute; left: 76%; bottom: 21px; display: grid; color: #9a9a9d; opacity: .85; pointer-events: none; }
.notice strong { font-weight: 400; font-size: 12px; line-height: 16px; }
.notice span { font-size: 9px; line-height: 14px; }
```
